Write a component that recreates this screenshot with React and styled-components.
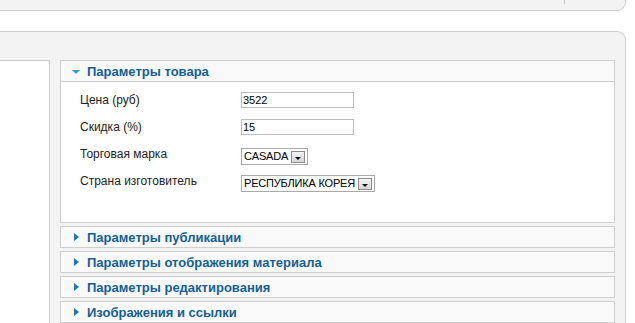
import React from 'react'
import styled, { createGlobalStyle } from 'styled-components';

const GlobalStyle = createGlobalStyle`
  html, body {
    margin: 0;
    padding: 0;
    background: #fff;
    font-family: "Liberation Sans", Arial, sans-serif;
  }
`;

const fields = [
  { label: 'Цена (руб)', kind: 'input', value: '3522' },
  { label: 'Скидка (%)', kind: 'input', value: '15' },
  { label: 'Торговая марка', kind: 'select', value: 'CASADA' },
  { label: 'Страна изготовитель', kind: 'select', value: 'РЕСПУБЛИКА КОРЕЯ' },
];

const closedPanes = [
  'Параметры публикации',
  'Параметры отображения материала',
  'Параметры редактирования',
  'Изображения и ссылки',
];

const App = () => {
  return (
    <Page>
      <GlobalStyle />
      <Toolbar>
        <ToolbarDivider />
      </Toolbar>
      <MainPanel>
        <Columns>
          <SideColumn />
          <Accordion>
            <Pane>
              <PaneHeader>
                <Arrow open />
                <PaneTitle>Параметры товара</PaneTitle>
              </PaneHeader>
              <PaneBody>
                <FormGrid>
                  {fields.map((f) => (
                    <React.Fragment key={f.label}>
                      <Label>{f.label}</Label>
                      <div>
                        {f.kind === 'input' ? (
                          <TextField>{f.value}</TextField>
                        ) : (
                          <SelectBox>
                            <SelectText>{f.value}</SelectText>
                            <SelectButton>
                              <Caret />
                            </SelectButton>
                          </SelectBox>
                        )}
                      </div>
                    </React.Fragment>
                  ))}
                </FormGrid>
              </PaneBody>
            </Pane>
            {closedPanes.map((title) => (
              <Pane key={title}>
                <PaneHeader>
                  <Arrow />
                  <PaneTitle>{title}</PaneTitle>
                </PaneHeader>
              </Pane>
            ))}
          </Accordion>
        </Columns>
      </MainPanel>
    </Page>
  )
}

const Page = styled.div`
  width: 635px;
  height: 323px;
  overflow: hidden;
  background: #fff;
`;

const Toolbar = styled.div`
  box-sizing: border-box;
  width: 626px;
  height: 11px;
  background: #f3f3f3;
  border: 1px solid #cfcfcf;
  border-top: none;
  border-left: none;
  border-bottom-right-radius: 9px;
  display: flex;
  justify-content: flex-end;
  padding-right: 60px;
`;

const ToolbarDivider = styled.div`
  width: 1px;
  height: 4px;
  background: #c8c8c8;
`;

const MainPanel = styled.div`
  box-sizing: border-box;
  margin-top: 20px;
  width: 626px;
  height: 300px;
  background: #f3f3f3;
  border: 1px solid #cfcfcf;
  border-left: none;
  border-bottom: none;
  border-top-right-radius: 9px;
  padding: 28px 10px 0 0;
`;

const Columns = styled.div`
  display: flex;
  gap: 10px;
  height: 100%;
`;

const SideColumn = styled.div`
  box-sizing: border-box;
  width: 50px;
  background: #fff;
  border-top: 1px solid #cfcfcf;
  border-right: 1px solid #cfcfcf;
`;

const Accordion = styled.div`
  flex: 1;
  display: flex;
  flex-direction: column;
  gap: 3px;
`;

const Pane = styled.div`
  border: 1px solid #cfcfcf;
  background: #f9f9f9;
`;

const PaneHeader = styled.div`
  height: 20px;
  display: flex;
  align-items: center;
  padding-left: 11px;
`;

const Arrow = styled.span`
  width: 0;
  height: 0;
  margin-right: ${(p) => (p.open ? '7px' : '8px')};
  margin-left: ${(p) => (p.open ? '0' : '2px')};
  border-style: solid;
  border-color: transparent;
  ${(p) =>
    p.open
      ? `border-width: 4px 4px 0 4px; border-top-color: #3b9ad6; margin-top: 1px;`
      : `border-width: 4px 0 4px 5px; border-left-color: #1e78b4;`}
`;

const PaneTitle = styled.span`
  font-size: 13px;
  font-weight: bold;
  color: #135f94;
`;

const PaneBody = styled.div`
  background: #fff;
  border-top: 1px solid #cfcfcf;
  height: 141px;
  box-sizing: border-box;
  padding: 10px 0 0 19px;
`;

const FormGrid = styled.div`
  display: grid;
  grid-template-columns: 161px auto;
  grid-auto-rows: 27px;
  align-items: start;
`;

const Label = styled.div`
  font-size: 12px;
  color: #222;
  line-height: 16px;
`;

const TextField = styled.div`
  box-sizing: border-box;
  width: 113px;
  height: 16px;
  border: 1px solid #bdbdbd;
  background: #fff;
  font-size: 11px;
  line-height: 14px;
  padding-left: 1px;
  color: #000;
`;

const SelectBox = styled.div`
  box-sizing: border-box;
  display: inline-flex;
  align-items: center;
  height: 17px;
  border: 1px solid #a9a9a9;
  background: #fff;
  padding: 0 2px 0 2px;
  gap: 3px;
`;

const SelectText = styled.span`
  font-size: 11px;
  color: #000;
  line-height: 13px;
  letter-spacing: -0.2px;
`;

const SelectButton = styled.span`
  box-sizing: border-box;
  width: 14px;
  height: 12px;
  border: 1px solid #8c8c8c;
  background: linear-gradient(#f4f4f4, #d6d6d6);
  display: flex;
  align-items: flex-end;
  justify-content: center;
  padding-bottom: 2px;
`;

const Caret = styled.span`
  width: 0;
  height: 0;
  border-style: solid;
  border-width: 3px 3px 0 3px;
  border-color: #000 transparent transparent transparent;
`;

export default App
